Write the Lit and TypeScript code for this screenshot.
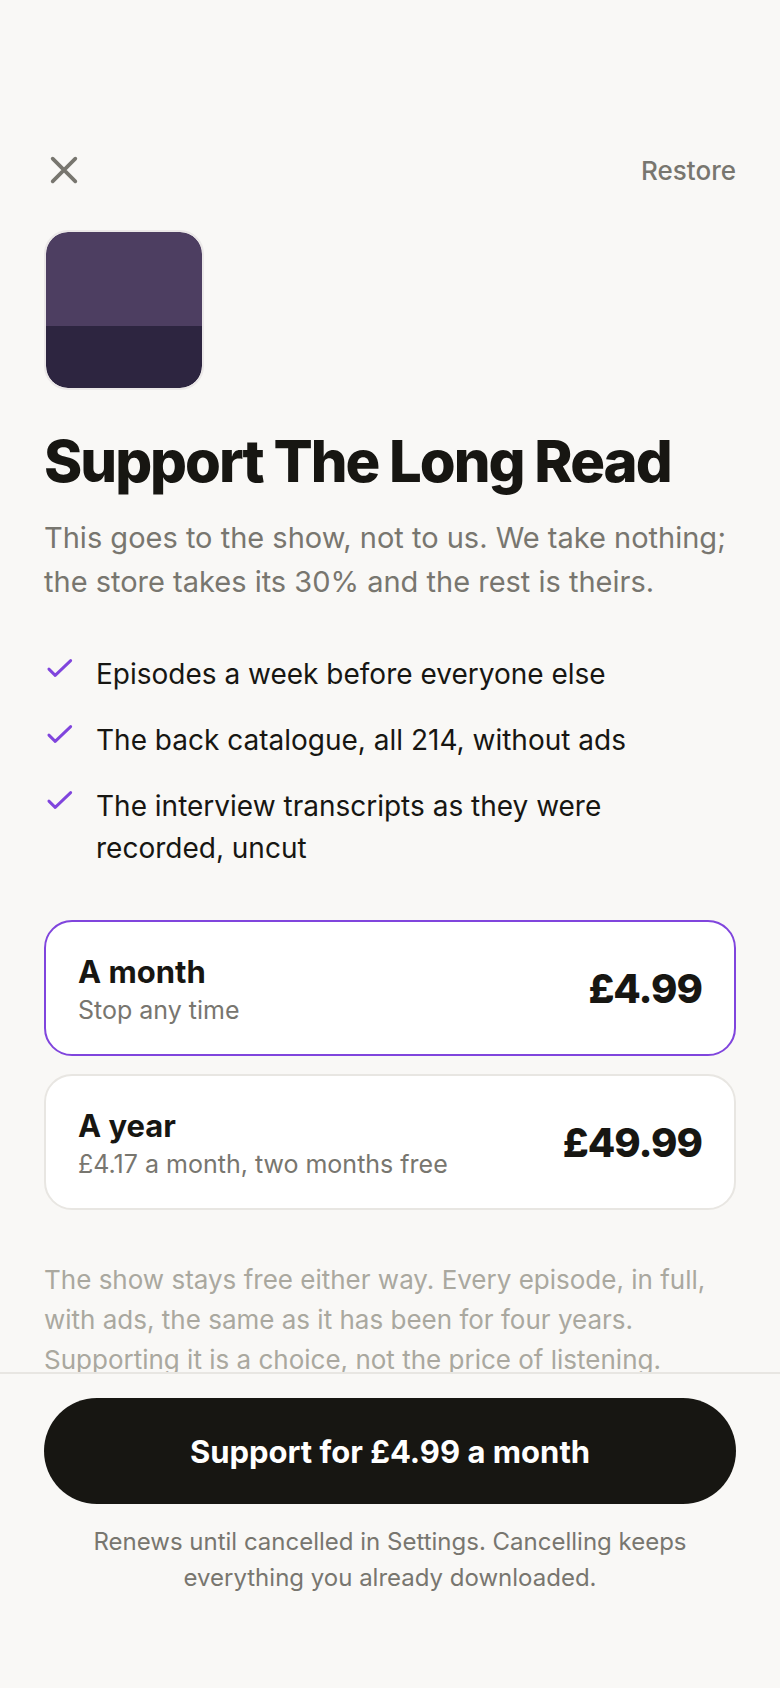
import { LitElement, html, css, TemplateResult } from 'lit'
import { customElement, state } from 'lit/decorators.js'
import { classMap } from 'lit/directives/class-map.js'

interface Plan {
  id: string
  name: string
  note: string
  price: string
  period: string
}

const PLANS: Plan[] = [
  {
    id: 'month',
    name: 'A month',
    note: 'Stop any time',
    price: '£4.99',
    period: 'a month',
  },
  {
    id: 'year',
    name: 'A year',
    note: '£4.17 a month, two months free',
    price: '£49.99',
    period: 'a year',
  },
]

const BENEFITS: string[] = [
  'Episodes a week before everyone else',
  'The back catalogue, all 214, without ads',
  'The interview transcripts as they were recorded, uncut',
]

/**
 * Support screen
 * Lists what supporters get, the two plans and the purchase button
 */
@customElement('app-root')
export class AppRoot extends LitElement {
  @state()
  private selected: string = 'month'

  static styles = css`
    :host {
      --ink: #171612;
      --muted: #78766f;
      --faint: #aaa89f;
      --line: #e8e6e2;
      --accent: #8045dd;
      --page: #f9f8f6;

      display: flex;
      flex-direction: column;
      height: 100vh;
      background: var(--page);
      color: var(--ink);
      font-family: Inter, 'Liberation Sans', sans-serif;
      font-size: 28px;
    }

    * {
      box-sizing: border-box;
    }

    h1,
    p,
    ul {
      margin: 0;
      padding: 0;
    }

    button {
      border: 0;
      padding: 0;
      background: none;
      color: inherit;
      font: inherit;
      cursor: pointer;
    }

    svg {
      display: block;
      fill: none;
      stroke: currentColor;
      stroke-width: 2.2;
      stroke-linecap: round;
      stroke-linejoin: round;
    }

    .scroll {
      flex: 1;
      min-height: 0;
      overflow-y: auto;
      scrollbar-width: none;
      padding: 150px 44px 48px;
    }

    .top-bar {
      display: flex;
      align-items: center;
      justify-content: space-between;
      height: 40px;
      color: var(--muted);
    }

    .close svg {
      width: 40px;
      height: 40px;
    }

    .restore {
      font-size: 26px;
      font-weight: 500;
    }

    .cover {
      width: 160px;
      height: 160px;
      margin-top: 40px;
      border: 2px solid #ebe8e8;
      border-radius: 24px;
      background: linear-gradient(#4d3e61 60%, #2d2540 60%) padding-box;
    }

    .title {
      margin-top: 40px;
      font-size: 58px;
      font-weight: 800;
      line-height: 62px;
      letter-spacing: -2px;
    }

    .lead {
      margin-top: 24px;
      color: var(--muted);
      font-size: 29px;
      line-height: 44px;
    }

    .benefits {
      display: flex;
      flex-direction: column;
      gap: 24px;
      margin-top: 49px;
      list-style: none;
      line-height: 42px;
    }

    .benefit {
      display: flex;
      align-items: flex-start;
      gap: 20px;
    }

    .benefit svg {
      flex: none;
      width: 32px;
      height: 32px;
      color: var(--accent);
    }

    .plans {
      display: flex;
      flex-direction: column;
      gap: 18px;
      margin: 51px 0 0;
      border: 0;
      padding: 0;
    }

    .plan {
      display: flex;
      align-items: center;
      min-height: 136px;
      border: 2px solid var(--line);
      border-radius: 28px;
      padding: 24px 32px;
      background: #fff;
      cursor: pointer;
    }

    .plan.selected {
      border-color: var(--accent);
    }

    .plan input {
      appearance: none;
      width: 0;
      height: 0;
      margin: 0;
      outline: none;
    }

    .plan-text {
      display: flex;
      flex: 1;
      flex-direction: column;
      padding-top: 4px;
    }

    .plan-name {
      font-size: 31px;
      font-weight: 700;
      line-height: 40px;
    }

    .plan-note {
      color: var(--muted);
      font-size: 25px;
      line-height: 36px;
    }

    .plan-price {
      font-size: 40px;
      font-weight: 800;
      letter-spacing: -1px;
    }

    .promise {
      margin-top: 50px;
      color: var(--faint);
      font-size: 26px;
      line-height: 40px;
    }

    .footer {
      border-top: 2px solid var(--line);
      padding: 24px 44px 92px;
    }

    .buy {
      display: block;
      width: 100%;
      height: 106px;
      border-radius: 53px;
      background: var(--ink);
      color: #fff;
      font-size: 31px;
      font-weight: 700;
    }

    .terms {
      margin-top: 20px;
      color: var(--muted);
      font-size: 24px;
      line-height: 36px;
      text-align: center;
    }
  `

  render(): TemplateResult {
    const plan = PLANS.find(p => p.id === this.selected) ?? PLANS[0]

    return html`
      <main class="scroll">
        <div class="top-bar">
          <button class="close" type="button" aria-label="Close">
            <svg viewBox="0 0 24 24">
              <path d="M5.2 5.2l13.6 13.6M18.8 5.2L5.2 18.8" />
            </svg>
          </button>
          <button class="restore" type="button">Restore</button>
        </div>
        <div class="cover"></div>
        <h1 class="title">Support The Long Read</h1>
        <p class="lead">
          This goes to the show, not to us. We take nothing; the store takes its
          30% and the rest is theirs.
        </p>
        <ul class="benefits">
          ${BENEFITS.map(benefit => this.renderBenefit(benefit))}
        </ul>
        <fieldset class="plans" aria-label="Plan">
          ${PLANS.map(p => this.renderPlan(p))}
        </fieldset>
        <p class="promise">
          The show stays free either way. Every episode, in full, with ads, the
          same as it has been for four years. Supporting it is a choice, not the
          price of listening.
        </p>
      </main>
      <footer class="footer">
        <button class="buy" type="button">
          Support for ${plan.price} ${plan.period}
        </button>
        <p class="terms">
          Renews until cancelled in Settings. Cancelling keeps everything you
          already downloaded.
        </p>
      </footer>
    `
  }

  private renderBenefit(benefit: string): TemplateResult {
    return html`
      <li class="benefit">
        <svg viewBox="0 0 24 24"><path d="M3.7 12.1l4.7 4.7L20 5.7" /></svg>
        <span>${benefit}</span>
      </li>
    `
  }

  private renderPlan(plan: Plan): TemplateResult {
    const selected = plan.id === this.selected

    return html`
      <label class=${classMap({ plan: true, selected })} for=${plan.id}>
        <input
          type="radio"
          name="plan"
          id=${plan.id}
          .checked=${selected}
          @change=${() => this.selectPlan(plan.id)}
        />
        <span class="plan-text">
          <span class="plan-name">${plan.name}</span>
          <span class="plan-note">${plan.note}</span>
        </span>
        <span class="plan-price">${plan.price}</span>
      </label>
    `
  }

  private selectPlan(id: string): void {
    this.selected = id
  }
}
